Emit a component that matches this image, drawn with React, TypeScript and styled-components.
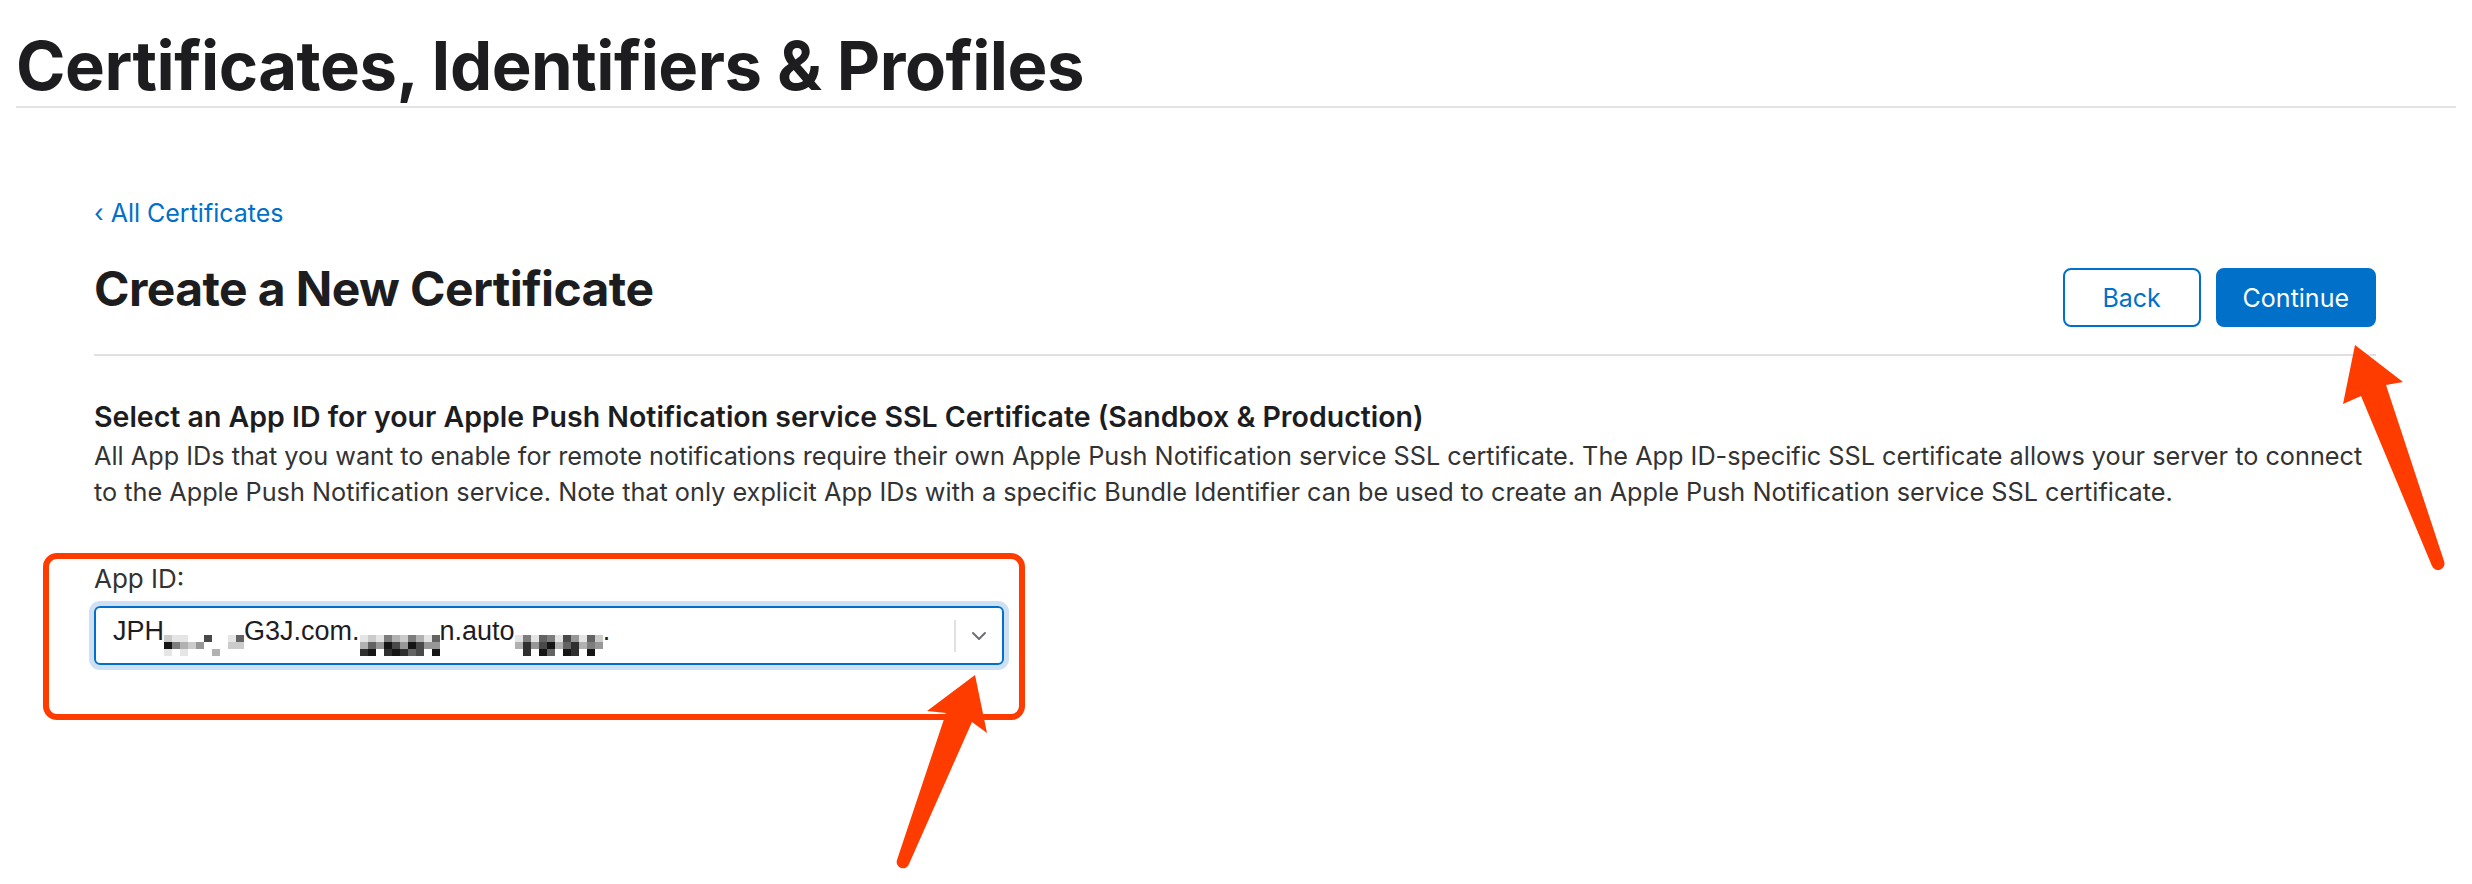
import React from "react";
import styled, { createGlobalStyle } from "styled-components";

const GlobalStyle = createGlobalStyle`
  html, body { margin: 0; padding: 0; background: #ffffff; }
  body { font-family: Inter, "Noto Sans", sans-serif; color: #1d1d1f; }
  * { box-sizing: border-box; }
`;

const Page = styled.div`
  position: relative;
  width: 2472px;
  height: 884px;
  overflow: hidden;
  background: #fff;
`;

const Header = styled.header`
  padding: 26px 16px 0;
`;

const SiteTitle = styled.h1`
  margin: 0;
  font-family: Inter, sans-serif;
  font-weight: 700;
  font-size: 67px;
  line-height: 80px;
  letter-spacing: -0.5px;
  color: #1d1d1f;
  border-bottom: 2px solid #e3e3e3;
`;

const Main = styled.main`
  padding: 0 96px 0 94px;
`;

const BackLink = styled.a`
  display: block;
  margin-top: 89px;
  font-size: 25px;
  line-height: 32px;
  color: #0070c9;
  text-decoration: none;
`;

const TitleRow = styled.div`
  display: flex;
  align-items: flex-start;
  justify-content: space-between;
  margin-top: 30px;
  padding-bottom: 27px;
  border-bottom: 2px solid #e0e0e0;
`;

const PageTitle = styled.h2`
  margin: 0;
  font-weight: 700;
  font-size: 48px;
  line-height: 60px;
  letter-spacing: -0.6px;
  color: #1d1d1f;
`;

const ButtonGroup = styled.div`
  display: flex;
  gap: 15px;
  margin-top: 9px;
`;

const Button = styled.button<{ $primary?: boolean }>`
  height: 59px;
  min-width: 138px;
  padding: 0 25px;
  border-radius: 8px;
  border: 2px solid #0070c9;
  background: ${(p) => (p.$primary ? "#0070c9" : "#ffffff")};
  color: ${(p) => (p.$primary ? "#ffffff" : "#0070c9")};
  font-family: Inter, sans-serif;
  font-size: 25px;
  font-weight: 400;
  cursor: pointer;
`;

const SectionHeading = styled.h3`
  margin: 43px 0 0;
  font-weight: 600;
  font-size: 28.5px;
  line-height: 36px;
  color: #1d1d1f;
`;

const Description = styled.p`
  margin: 3px 0 0;
  font-size: 25.25px;
  line-height: 36px;
  color: #333333;
`;

const Highlight = styled.div`
  margin: 43px 0 0 -51px;
  width: 982px;
  border: 6px solid #ff3c00;
  border-radius: 14px;
  padding: 5px 0 49px 45px;
`;

const FieldLabel = styled.label`
  display: block;
  font-size: 26px;
  line-height: 30px;
  color: #333333;
`;

const SelectBox = styled.div`
  display: flex;
  align-items: center;
  width: 910px;
  height: 59px;
  margin-top: 12px;
  padding-left: 17px;
  border: 2px solid #0070c9;
  border-radius: 6px;
  box-shadow: 0 0 0 5px #cde0f4;
`;

const SelectValue = styled.span`
  font-family: "Liberation Sans", Arial, sans-serif;
  font-size: 27px;
  line-height: 31px;
  color: #1d1d1f;
  white-space: nowrap;
`;

const Mosaic = styled.span<{ $cols: number }>`
  display: inline-grid;
  grid-template-rows: repeat(3, 7px);
  grid-template-columns: repeat(${(p) => p.$cols}, 8px);
  grid-auto-flow: column;
  vertical-align: -2px;
`;

const MosaicCell = styled.span<{ $shade: number }>`
  background: ${(p) => {
    const v = Math.round(255 - p.$shade * 26);
    return `rgb(${v},${v},${v})`;
  }};
`;

const Indicator = styled.div`
  margin-left: auto;
  display: flex;
  align-items: center;
  height: 100%;
`;

const Separator = styled.span`
  width: 2px;
  height: 32px;
  background: #e1e1e1;
`;

const ChevronWrap = styled.span`
  display: flex;
  align-items: center;
  justify-content: center;
  width: 46px;
  color: #6e6e73;
`;

const ArrowLayer = styled.svg`
  position: absolute;
  left: 0;
  top: 0;
  width: 2472px;
  height: 884px;
  pointer-events: none;
`;

const Redacted = ({ pattern }: { pattern: string }) => {
  const cols = Math.ceil(pattern.length / 3);
  return (
    <Mosaic $cols={cols}>
      {pattern.split("").map((c, i) => (
        <MosaicCell key={i} $shade={Number(c)} />
      ))}
    </Mosaic>
  );
};

export default function App() {
  return (
    <Page>
      <GlobalStyle />
      <Header>
        <SiteTitle>Certificates, Identifiers &amp; Profiles</SiteTitle>
      </Header>
      <Main>
        <BackLink href="#">‹ All Certificates</BackLink>
        <TitleRow>
          <PageTitle>Create a New Certificate</PageTitle>
          <ButtonGroup>
            <Button>Back</Button>
            <Button $primary>Continue</Button>
          </ButtonGroup>
        </TitleRow>
        <SectionHeading>
          Select an App ID for your Apple Push Notification service SSL Certificate (Sandbox &amp; Production)
        </SectionHeading>
        <Description>
          All App IDs that you want to enable for remote notifications require their own Apple Push Notification
          service SSL certificate. The App ID-specific SSL certificate allows your server to connect
          <br />
          to the Apple Push Notification service. Note that only explicit App IDs with a specific Bundle Identifier
          can be used to create an Apple Push Notification service SSL certificate.
        </Description>
        <Highlight>
          <FieldLabel>App ID:</FieldLabel>
          <SelectBox>
            <SelectValue>
              JPH
              <Redacted pattern="291150131020040700003000120620" />
              G3J.com.
              <Redacted pattern="138269140598379248596377140649" />
              n.auto
              <Redacted pattern="130588140679596130769488130659240" />
              .
            </SelectValue>
            <Indicator>
              <Separator />
              <ChevronWrap>
                <svg width="16" height="10" viewBox="0 0 16 10">
                  <path d="M2 2 L8 8 L14 2" fill="none" stroke="currentColor" strokeWidth="2" strokeLinecap="round" strokeLinejoin="round" />
                </svg>
              </ChevronWrap>
            </Indicator>
          </SelectBox>
        </Highlight>
      </Main>
      <ArrowLayer viewBox="0 0 2472 884">
        <path
          d="M2355 345 L2403 382 L2386 385 L2444 561 A6 6 0 0 1 2432 566 L2361 396 L2343 404 Z"
          fill="#ff3c00"
        />
        <path
          d="M975 675 L987 733 L972 722 L909 864 A6 6 0 0 1 897 860 L946 713 L927 711 Z"
          fill="#ff3c00"
        />
      </ArrowLayer>
    </Page>
  );
}
